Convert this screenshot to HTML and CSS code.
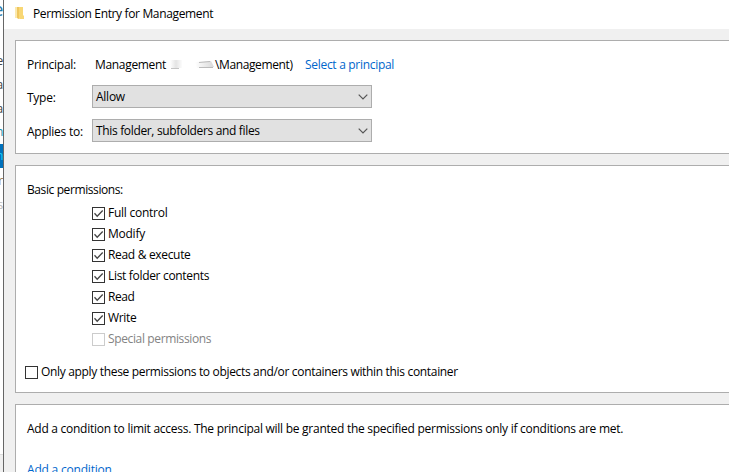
FILE: index.html
```html
<!DOCTYPE html>
<html lang="en">
<head>
<meta charset="utf-8">
<title>Permission Entry for Management</title>
<link rel="stylesheet" href="styles.css">
</head>
<body>
<div class="desktop">
  <div class="behind">
    <span class="frag frag-title">e</span>
    <span class="frag f1">e</span>
    <span class="frag f2">a</span>
    <span class="frag f3">a</span>
    <span class="frag f4">n</span>
    <span class="frag f5">n</span>
    <span class="frag f6">r</span>
    <span class="frag f7">s</span>
    <span class="status"></span>
  </div>
  <main class="window">
    <header class="titlebar">
      <svg class="folder" width="10" height="14" viewBox="0 0 10 14"><path d="M0 1h5v11H0z" fill="#fbe9ae"/><path d="M2 1h6v8l1 1v3H5l-3-1z" fill="#f8d775"/><path d="M2 1h2v12l-2-1z" fill="#efc65e"/></svg>
      <h1 class="title">Permission Entry for Management</h1>
    </header>
    <div class="content">
      <section class="panel identity">
        <div class="row principal">
          <span class="label">Principal:</span>
          <span class="name">Management</span>
          <svg class="redaction" width="48" height="14" viewBox="0 0 48 14">
            <defs><linearGradient id="a"><stop stop-color="#fff"/><stop offset=".5" stop-color="#e4e4e4"/><stop offset="1" stop-color="#fcfcfc"/></linearGradient><linearGradient id="b"><stop stop-color="#fff"/><stop offset="1" stop-color="#b9b9b9"/></linearGradient></defs>
            <path d="M3 2h12v8H3z" fill="url(#a)"/><path d="M4 10.500h8" stroke="#c4c4c4"/>
            <path d="M28 4l16-1 3 6-17 1z" fill="url(#b)" opacity=".55"/><path d="M32 4.500l11-1M32 9.500h14" stroke="#bbb"/>
          </svg>
          <span class="domain">\Management)</span>
          <a class="link select-link">Select a principal</a>
        </div>
        <div class="row type">
          <span class="label">Type:</span>
          <div class="select"><span>Allow</span><svg width="10" height="6" viewBox="0 0 10 6"><path d="M.7.7L5 5 9.300.7" fill="none" stroke="#555" stroke-width="1.2"/></svg></div>
        </div>
        <div class="row applies">
          <span class="label">Applies to:</span>
          <div class="select"><span class="scope">This folder, subfolders and files</span><svg width="10" height="6" viewBox="0 0 10 6"><path d="M.7.7L5 5 9.300.7" fill="none" stroke="#555" stroke-width="1.2"/></svg></div>
        </div>
      </section>
      <section class="panel permissions">
        <div class="heading">Basic permissions:</div>
        <div class="list">
          <div class="check"><svg class="box" viewBox="0 0 11 11"><path d="M1.500 5.300l2.700 2.900L9.700 2.500"/></svg><span>Full control</span></div>
          <div class="check"><svg class="box" viewBox="0 0 11 11"><path d="M1.500 5.300l2.700 2.900L9.700 2.500"/></svg><span>Modify</span></div>
          <div class="check"><svg class="box" viewBox="0 0 11 11"><path d="M1.500 5.300l2.700 2.900L9.700 2.500"/></svg><span class="tight">Read &amp; execute</span></div>
          <div class="check"><svg class="box" viewBox="0 0 11 11"><path d="M1.500 5.300l2.700 2.900L9.700 2.500"/></svg><span class="tight">List folder contents</span></div>
          <div class="check"><svg class="box" viewBox="0 0 11 11"><path d="M1.500 5.300l2.700 2.900L9.700 2.500"/></svg><span class="read">Read</span></div>
          <div class="check"><svg class="box" viewBox="0 0 11 11"><path d="M1.500 5.300l2.700 2.900L9.700 2.500"/></svg><span class="tight">Write</span></div>
          <div class="check disabled"><svg class="box" viewBox="0 0 11 11"></svg><span class="special">Special permissions</span></div>
        </div>
        <div class="check only"><svg class="box" viewBox="0 0 11 11"></svg><span class="only-text">Only apply these permissions to objects and/or containers within this container</span></div>
      </section>
      <section class="panel conditions">
        <div class="hint">Add a condition to limit access. The principal will be granted the specified permissions only if conditions are met.</div>
        <a class="link add">Add a condition</a>
      </section>
    </div>
  </main>
</div>
</body>
</html>
```
FILE: styles.css
```css
* { box-sizing: border-box; }
body {
  margin: 0;
  width: 729px;
  height: 472px;
  overflow: hidden;
  font: 12px/16px "Open Sans", sans-serif;
  letter-spacing: -0.25px;
  color: #000;
  white-space: nowrap;
}
.desktop { display: flex; height: 472px; }
.behind {
  position: relative;
  width: 3px;
  overflow: hidden;
  background: #fff;
}
.frag { position: absolute; right: 0; color: #444; }
.frag-title { top: -1px; font-size: 18px; line-height: 20px; color: #2678a8; }
.f1 { top: 53px; }
.f2 { top: 77px; }
.f3 { top: 101px; }
.f4 { top: 124px; color: #168aaa; }
.f5 { top: 144px; height: 24px; line-height: 24px; background: #0071bc; color: #19d2f5; }
.f6 { top: 173px; color: #9a7138; }
.f7 { top: 197px; color: #bbb; }
.status { position: absolute; left: 0; top: 454px; width: 3px; height: 18px; background: #f0f0f0; border-top: 1px solid #ddd; }
.window {
  flex: 1;
  min-width: 0;
  border-left: 1px solid #666;
  background: #f0f0f0;
}
.titlebar {
  display: flex;
  height: 29px;
  padding-left: 11px;
  background: #fff;
}
.folder { margin-top: 6px; }
.title { margin: 6px 0 0 8px; font-size: 12px; font-weight: 400; letter-spacing: -0.35px; }
.content {
  display: flex;
  flex-direction: column;
  gap: 11px;
  padding: 11px 0 0 11px;
}
.panel {
  border: 1px solid #adadad;
  border-right: 0;
  background: #fff;
  padding-left: 11px;
}
.identity { height: 114px; padding-top: 16px; }
.row { display: flex; }
.label { width: 65px; }
.principal { height: 28px; }
.principal .label { width: 68px; }
.name { width: 72px; letter-spacing: -0.32px; }
.redaction { margin: 1px 0 0; }
.domain { width: 90px; letter-spacing: -0.38px; }
.link { color: #0066cc; }
.select-link { letter-spacing: -0.3px; }
.type { height: 34px; }
.type .label, .applies .label { padding-top: 5px; }
.select {
  display: flex;
  justify-content: space-between;
  align-items: center;
  width: 280px;
  height: 23px;
  padding: 1px 3px 0;
  border: 1px solid #adadad;
  background: #e1e1e1;
}
.scope { letter-spacing: -0.34px; }
.permissions { height: 228px; padding-top: 16px; }
.heading { letter-spacing: -0.4px; }
.list { margin: 7px 0 0 65px; }
.check { display: flex; height: 21px; }
.box {
  width: 13px;
  height: 13px;
  margin: 2px 3px 0 0;
  border: 1px solid #333;
  fill: none;
  stroke: #444;
  stroke-width: 1.3;
}
.tight { letter-spacing: -0.32px; }
.read { letter-spacing: -0.45px; }
.special { letter-spacing: -0.37px; }
.disabled { color: #838383; }
.disabled .box { border-color: #ccc; }
.only { margin: 12px 0 0 -2px; }
.only-text { letter-spacing: -0.325px; }
.conditions { height: 90px; padding-top: 16px; }
.hint { height: 41px; letter-spacing: -0.267px; }
.add { letter-spacing: -0.2px; }
```
